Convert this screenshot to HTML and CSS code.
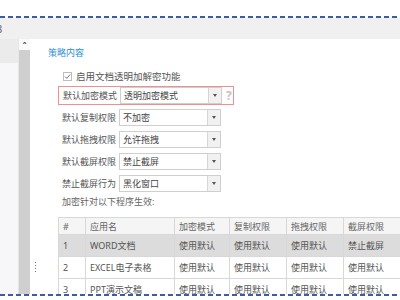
FILE: index.html
```html
<!DOCTYPE html>
<html lang="zh-CN">
<head>
    <meta charset="UTF-8">
    <title>策略内容</title>
    <link rel="stylesheet" href="styles.css">
</head>
<body>

<div class="gap-top"></div>
<div class="dash"></div>
<div class="tabbar"><span class="tab-tail">8</span></div>

<div class="layout">
    <div class="sidebar">
        <div class="side-item"></div>
    </div>
    <div class="scroll">
        <div class="scroll-up">&#710;</div>
        <div class="scroll-track"></div>
    </div>
    <div class="main">
        <div class="title">策略内容</div>

        <div class="form">
            <label class="check-row">
                <svg class="check" width="9" height="9" viewBox="0 0 9 9">
                    <rect x="0.5" y="0.5" width="8" height="8" fill="#fff" stroke="#bdbdbd"/>
                    <path d="M2 4.6 L3.8 6.4 L7.2 2.4" fill="none" stroke="#777" stroke-width="1"/>
                </svg>
                启用文档透明加解密功能
            </label>

            <div class="row row-active">
                <span class="label">默认加密模式</span>
                <div class="select">
                    <span class="value">透明加密模式</span>
                    <span class="arrow"></span>
                </div>
                <span class="help">?</span>
            </div>
            <div class="row">
                <span class="label">默认复制权限</span>
                <div class="select">
                    <span class="value">不加密</span>
                    <span class="arrow"></span>
                </div>
            </div>
            <div class="row">
                <span class="label">默认拖拽权限</span>
                <div class="select">
                    <span class="value">允许拖拽</span>
                    <span class="arrow"></span>
                </div>
            </div>
            <div class="row">
                <span class="label">默认截屏权限</span>
                <div class="select">
                    <span class="value">禁止截屏</span>
                    <span class="arrow"></span>
                </div>
            </div>
            <div class="row">
                <span class="label">禁止截屏行为</span>
                <div class="select">
                    <span class="value">黑化窗口</span>
                    <span class="arrow"></span>
                </div>
            </div>

            <div class="hint">加密针对以下程序生效:</div>

            <table class="grid">
                <colgroup>
                    <col class="c-no">
                    <col class="c-name">
                    <col class="c-mode">
                    <col class="c-perm">
                    <col class="c-perm">
                    <col class="c-perm">
                </colgroup>
                <thead>
                    <tr>
                        <th>#</th>
                        <th>应用名</th>
                        <th>加密模式</th>
                        <th>复制权限</th>
                        <th>拖拽权限</th>
                        <th>截屏权限</th>
                    </tr>
                </thead>
                <tbody>
                    <tr class="selected">
                        <td>1</td>
                        <td>WORD文档</td>
                        <td>使用默认</td>
                        <td>使用默认</td>
                        <td>使用默认</td>
                        <td>禁止截屏</td>
                    </tr>
                    <tr>
                        <td>2</td>
                        <td>EXCEL电子表格</td>
                        <td>使用默认</td>
                        <td>使用默认</td>
                        <td>使用默认</td>
                        <td>使用默认</td>
                    </tr>
                    <tr>
                        <td>3</td>
                        <td>PPT演示文稿</td>
                        <td>使用默认</td>
                        <td>使用默认</td>
                        <td>使用默认</td>
                        <td>使用默认</td>
                    </tr>
                </tbody>
            </table>
        </div>

        <div class="splitter"></div>
    </div>
</div>

<div class="dash"></div>

</body>
</html>
```

FILE: styles.css
```css
body {
    margin: 0;
    width: 400px;
    height: 300px;
    overflow: hidden;
    background: #fff;
    font-family: "Noto Sans", "Noto Sans CJK SC", sans-serif;
    font-size: 9px;
    color: #555;
}
.gap-top {
    height: 16px;
}
.dash {
    height: 2px;
    background: repeating-linear-gradient(90deg, #3d5ca6 0 5px, transparent 5px 8px);
}
.tabbar {
    height: 21px;
    background: #f0f0f0;
    line-height: 21px;
    overflow: hidden;
}
.tab-tail {
    display: inline-block;
    margin-left: -4px;
    font-size: 11px;
    color: #666;
}
.layout {
    display: flex;
    height: 255px;
}
.sidebar {
    width: 18px;
    background: #f7f7f9;
    border-right: 1px solid #e6e6e6;
}
.side-item {
    height: 24px;
    background: #ebebeb;
}
.scroll {
    width: 11px;
    display: flex;
    flex-direction: column;
}
.scroll-up {
    height: 11px;
    line-height: 16px;
    text-align: center;
    font-size: 10px;
    color: #444;
    background: #fafafa;
}
.scroll-track {
    flex: 1;
    background: #cfcfcf;
}
.main {
    flex: 1;
    position: relative;
    overflow: hidden;
    padding: 7px 0 0 18px;
}
.title {
    color: #2d8fd5;
    line-height: 14px;
}
.form {
    margin: 9px 0 0 10px;
}
.check-row {
    display: flex;
    align-items: center;
    gap: 4px;
    height: 14px;
    padding-left: 5px;
    font-size: 9.5px;
}
.row {
    display: flex;
    align-items: center;
    height: 17px;
    margin-top: 5px;
    padding-left: 4px;
}
.row-active {
    width: 170px;
    height: 17px;
    margin-top: 3px;
    border: 1px solid #ef8f8f;
}
.row-active + .row {
    margin-top: 4px;
}
.label {
    width: 57px;
    white-space: nowrap;
}
.select {
    display: flex;
    width: 100px;
    height: 15px;
    border: 1px solid #cfcfcf;
    background: #fff;
}
.value {
    flex: 1;
    padding-left: 3px;
    line-height: 15px;
    color: #444;
    white-space: nowrap;
}
.arrow {
    width: 12px;
    border-left: 1px solid #d6d6d6;
    background: #f1f1f1;
    position: relative;
}
.arrow::after {
    content: "";
    position: absolute;
    left: 4px;
    top: 6px;
    border-left: 2.5px solid transparent;
    border-right: 2.5px solid transparent;
    border-top: 3px solid #555;
}
.help {
    margin-left: 4px;
    font-size: 12px;
    font-weight: bold;
    color: #c4c4c4;
}
.hint {
    margin-top: 3px;
    padding-left: 4px;
    line-height: 13px;
    color: #666;
}
.grid {
    margin-top: 9px;
    border-collapse: collapse;
    table-layout: fixed;
    width: 342px;
}
.grid th,
.grid td {
    border: 1px solid #d8d8d8;
    padding: 0 0 0 4px;
    text-align: left;
    font-weight: normal;
    white-space: nowrap;
    overflow: hidden;
    color: #555;
}
.grid th {
    height: 16px;
    background: #f5f5f5;
    color: #666;
}
.grid td {
    height: 21px;
}
.grid tr.selected td {
    background: #dcdcdc;
}
.c-no { width: 27px; }
.c-name { width: 89px; }
.c-mode { width: 55px; }
.c-perm { width: 57px; }
.splitter {
    position: absolute;
    left: 5px;
    top: 223px;
    width: 1px;
    height: 10px;
    background: repeating-linear-gradient(180deg, #777 0 1px, transparent 1px 3px);
}
```
